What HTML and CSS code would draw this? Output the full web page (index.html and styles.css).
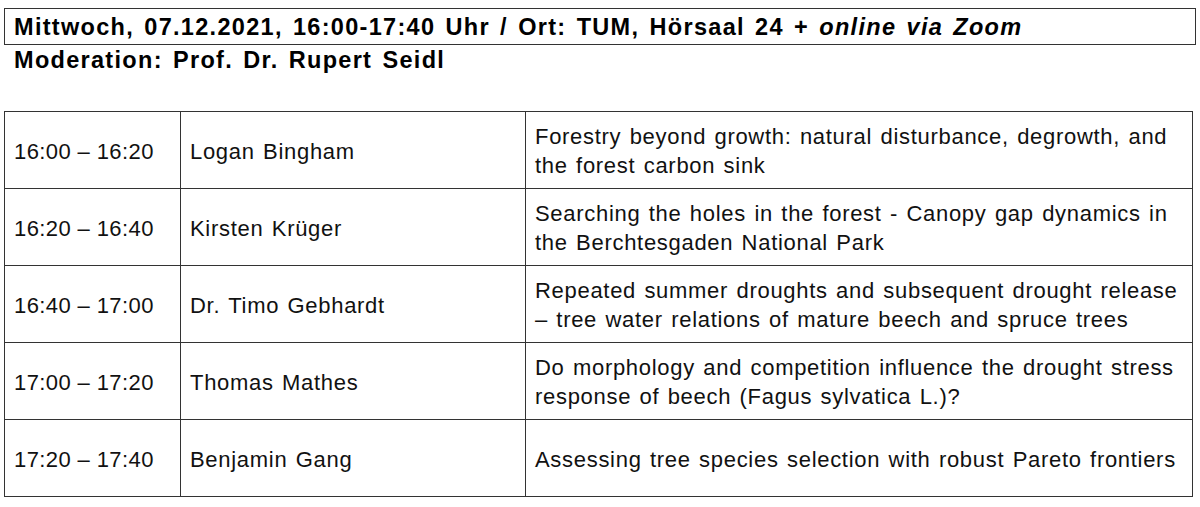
FILE: index.html
```html
<!DOCTYPE html>
<html lang="de">
<head>
<meta charset="utf-8">
<link rel="stylesheet" href="styles.css">
</head>
<body>
<div class="page">
  <div class="head-box">Mittwoch, 07.12.2021, 16:00-17:40 Uhr / Ort: TUM, Hörsaal 24 + <em>online via Zoom</em></div>
  <div class="moderation">Moderation: Prof. Dr. Rupert Seidl</div>
  <table class="schedule">
    <tr>
      <td class="c-time">16:00 – 16:20</td>
      <td class="c-name">Logan Bingham</td>
      <td class="c-topic">Forestry beyond growth: natural disturbance, degrowth, and the forest carbon sink</td>
    </tr>
    <tr>
      <td class="c-time">16:20 – 16:40</td>
      <td class="c-name">Kirsten Krüger</td>
      <td class="c-topic">Searching the holes in the forest - Canopy gap dynamics in the Berchtesgaden National Park</td>
    </tr>
    <tr>
      <td class="c-time">16:40 – 17:00</td>
      <td class="c-name">Dr. Timo Gebhardt</td>
      <td class="c-topic">Repeated summer droughts and subsequent drought release – tree water relations of mature beech and spruce trees</td>
    </tr>
    <tr>
      <td class="c-time">17:00 – 17:20</td>
      <td class="c-name">Thomas Mathes</td>
      <td class="c-topic">Do morphology and competition influence the drought stress response of beech (Fagus sylvatica L.)?</td>
    </tr>
    <tr>
      <td class="c-time">17:20 – 17:40</td>
      <td class="c-name">Benjamin Gang</td>
      <td class="c-topic">Assessing tree species selection with robust Pareto frontiers</td>
    </tr>
  </table>
</div>
</body>
</html>
```
FILE: styles.css
```css
html, body {
  margin: 0;
  padding: 0;
  background: #ffffff;
}
body {
  font-family: "Liberation Sans", Arial, sans-serif;
  color: #111111;
}
.page {
  padding: 8px 0 0 4px;
  width: 1192px;
}
.head-box {
  border: 1.5px solid #333333;
  height: 37px;
  box-sizing: border-box;
  padding: 0 0 0 9px;
  font-size: 23.5px;
  font-weight: bold;
  letter-spacing: 1.3px;
  word-spacing: 2.4px;
  line-height: 36px;
  color: #000;
}
.head-box em {
  font-style: italic;
}
.moderation {
  padding-left: 10px;
  font-size: 23.5px;
  font-weight: bold;
  letter-spacing: 1.3px;
  word-spacing: 2.4px;
  line-height: 28px;
  margin-top: 1px;
  color: #000;
}
.schedule {
  margin-top: 37px;
  width: 1189px;
  border-collapse: collapse;
  font-size: 22px;
  letter-spacing: 0.7px;
  word-spacing: 1.6px;
}
.schedule td {
  border: 1.5px solid #333333;
  height: 77px;
  box-sizing: border-box;
  padding: 0 9px 0 9px;
  line-height: 29px;
  vertical-align: middle;
}
.schedule td.c-time {
  width: 176px;
  letter-spacing: 0.4px;
  word-spacing: 0;
  padding-top: 2px;
}
.schedule td.c-name {
  width: 345px;
  padding-top: 2px;
}
.schedule td.c-topic {
  padding-right: 4px;
  padding-top: 2px;
}
```
